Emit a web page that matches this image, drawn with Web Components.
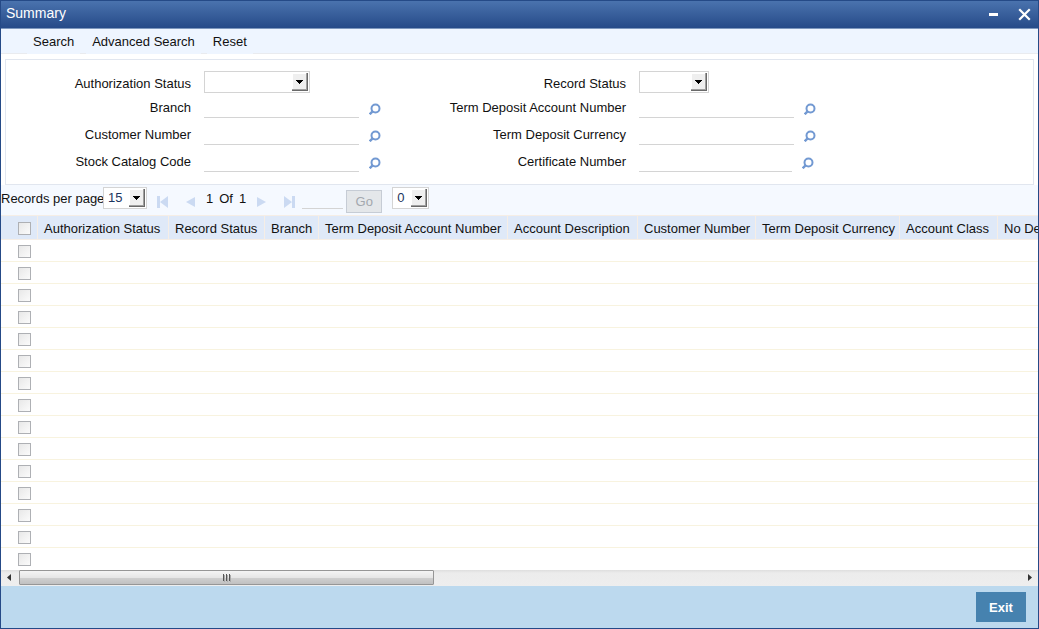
<!DOCTYPE html>
<html lang="en">
<head>
<meta charset="utf-8">
<title>Summary</title>
<style>
  html, body { margin: 0; height: 100%; }
  body { font: 13px/16px "Liberation Sans", Arial, sans-serif; color: #111; background: #fff; }
</style>
</head>
<body>
<app-window>
  <title-bar slot="title">Summary</title-bar>
  <menu-bar slot="menu">
    <menu-action>Search</menu-action>
    <menu-action>Advanced Search</menu-action>
    <menu-action>Reset</menu-action>
  </menu-bar>
  <filter-panel>
    <filter-column>
      <select-field label="Authorization Status" size="wide"></select-field>
      <lookup-field label="Branch"></lookup-field>
      <lookup-field label="Customer Number"></lookup-field>
      <lookup-field label="Stock Catalog Code"></lookup-field>
    </filter-column>
    <filter-column>
      <select-field label="Record Status"></select-field>
      <lookup-field label="Term Deposit Account Number"></lookup-field>
      <lookup-field label="Term Deposit Currency"></lookup-field>
      <lookup-field label="Certificate Number" short></lookup-field>
    </filter-column>
  </filter-panel>
  <pager-bar></pager-bar>
  <data-grid rows="15"
    columns="Authorization Status|Record Status|Branch|Term Deposit Account Number|Account Description|Customer Number|Term Deposit Currency|Account Class|No De"
    widths="131|96|54|189|130|118|144|98|120"></data-grid>
  <scroll-strip></scroll-strip>
  <footer-bar slot="footer"></footer-bar>
</app-window>

<script>
const define = (name, render) => customElements.define(name, class extends HTMLElement {
  constructor() {
    super();
    this.attachShadow({ mode: 'open' });
  }
  connectedCallback() {
    if (!this.shadowRoot.childNodes.length) this.shadowRoot.innerHTML = render(this);
  }
});

define('app-window', () => `
  <style>
    :host { display: flex; flex-direction: column; box-sizing: border-box; min-height: 100%;
            border: 1px solid #254a87; background: #fff; }
    main { flex: 1; min-width: 0; background: #fff; }
  </style>
  <slot name="title"></slot><slot name="menu"></slot>
  <main><slot></slot></main>
  <slot name="footer"></slot>`);

define('title-bar', () => `
  <style>
    :host { display: flex; align-items: center; height: 27px; padding: 0 7px 0 5px;
            border-bottom: 1px solid #7d97bd; color: #fff; font-size: 14px;
            background: linear-gradient(#4a73ae, #264a88); }
    h1 { flex: 1; margin: 0; font: inherit; line-height: 24px; padding-bottom: 3px; }
    div { display: flex; gap: 18px; }
    button { width: 13px; height: 13px; padding: 0; border: 0; background: none; color: inherit; }
    svg { display: block; }
  </style>
  <h1><slot></slot></h1>
  <div>
    <button aria-label="Minimize"><svg width="13" height="13"><path d="M2 5h9v3H2z" fill="#fff"/></svg></button>
    <button aria-label="Close"><svg width="13" height="13"><path d="M2 2l9 9M11 2l-9 9" stroke="#fff" stroke-width="2.2" stroke-linecap="square"/></svg></button>
  </div>`);

define('menu-bar', () => `
  <style>
    :host { display: flex; gap: 6px; height: 24px; padding-left: 26px;
            background: #eef5ff; border-bottom: 1px solid #e9ebef; }
  </style><slot></slot>`);

define('menu-action', () => `
  <style>
    :host { display: block; height: 25px; background: #eef5ff; }
    button { height: 25px; padding: 1px 6px 0; border: 0; background: none; font: inherit; color: inherit; }
  </style><button><slot></slot></button>`);

define('filter-panel', () => `
  <style>
    :host { display: flex; box-sizing: border-box; margin: 5px 4px 0; padding: 11px 0 12px;
            border: 1px solid #e1e6ef; }
  </style><slot></slot>`);

define('filter-column', () => `
  <style>
    :host { display: flex; flex-direction: column; gap: 2px; width: 435px; }
  </style><slot></slot>`);

const fieldStyle = `
  :host { display: flex; }
  label { box-sizing: border-box; width: 185px; margin-right: 13px; padding-top: 5px; text-align: right;
          white-space: nowrap; }`;

const selectStyle = `
  .select { position: relative; display: block; height: 22px; }
  select { appearance: none; display: block; box-sizing: border-box; width: 100%; height: 22px; margin: 0;
           padding: 0 18px 0 4px; border: 1px solid #d4d4d4; border-radius: 0;
           background: #fff; font: inherit; color: #1c3560; }
  .select svg { position: absolute; right: 2px; top: 2px; pointer-events: none; }`;

const selectButton = `
  <svg width="16" height="18" shape-rendering="crispEdges">
    <rect width="16" height="18" fill="#696969"/><rect width="15" height="17" fill="#a0a0a0"/>
    <rect width="14" height="16" fill="#fff"/><rect x="1" y="1" width="13" height="15" fill="#efefef"/>
    <path d="M4 7h7v1h-1v1h-1v1h-1v1h-1v-1h-1v-1h-1v-1h-1z" fill="#000"/>
  </svg>`;

define('select-field', host => `
  <style>${fieldStyle}${selectStyle}
    :host { height: 20px; }
    .select { width: 70px; }
    :host([size="wide"]) .select { width: 106px; }
  </style>
  <label for="value">${host.getAttribute('label')}</label>
  <span class="select"><select id="value"><option></option></select>${selectButton}</span>`);

define('lookup-field', host => `
  <style>${fieldStyle}
    :host { height: 25px; }
    label { padding-top: 7px; }
    input { box-sizing: border-box; width: 155px; height: 25px; margin: 0; padding: 0 2px; border: 0;
            border-bottom: 1px solid #d4d4d4; background: none; font: inherit; }
    :host([short]) input { width: 153px; }
    button { align-self: flex-end; margin: 0 0 3px 10px; padding: 0; border: 0; background: none; }
    svg { display: block; }
  </style>
  <label for="value">${host.getAttribute('label')}</label>
  <input id="value" type="text">
  <button aria-label="Look up ${host.getAttribute('label')}">
    <svg width="12" height="12" fill="none" stroke="#7299d2">
      <circle cx="6.500" cy="5.500" r="4" stroke-width="2"/><path d="M3.600 8.400L.7 11.300" stroke-width="2.4"/>
    </svg>
  </button>`);

define('pager-bar', () => `
  <style>${selectStyle}
    :host { display: flex; height: 28px; padding-top: 2px; background: #f5f9ff; }
    label { padding-top: 4px; width: 102px; white-space: nowrap; }
    .size { width: 44px; }
    .jump { width: 37px; margin-left: 10px; }
    button { padding: 0; border: 0; background: none; font: inherit; }
    .nav { width: 12px; height: 12px; margin: 9px 0 0 10px; }
    .nav svg { display: block; fill: #cbdaf2; }
    .gap { margin-left: 16px; }
    .count { display: flex; gap: 6px; margin-left: 9px; padding-top: 4px; }
    input { box-sizing: border-box; width: 41px; height: 22px; margin: 0 3px 0 6px; padding: 0; border: 0;
            border-bottom: 1px solid #d4d4d4; background: none; font: inherit; }
    .go { box-sizing: border-box; width: 36px; height: 23px; margin-top: 3px;
          border: 1px solid #c6ccd5; background: #e4e7ea; color: #a3a8ae; }
  </style>
  <label for="size">Records per page</label>
  <span class="select size"><select id="size"><option>15</option></select>${selectButton}</span>
  <button class="nav" aria-label="First page"><svg width="12" height="12"><path d="M0 0h3v12H0zM11 0v12L3 6z"/></svg></button>
  <button class="nav gap" aria-label="Previous page"><svg width="12" height="12"><path d="M10 1v10L1 6z"/></svg></button>
  <span class="count"><span>1</span><span>Of</span><span>1</span></span>
  <button class="nav" aria-label="Next page"><svg width="12" height="12"><path d="M1 1v10l9-5z"/></svg></button>
  <button class="nav gap" aria-label="Last page"><svg width="12" height="12"><path d="M8 0h3v12H8zM0 0v12l8-6z"/></svg></button>
  <input type="text" aria-label="Page number">
  <button class="go" disabled>Go</button>
  <span class="select jump"><select aria-label="Lock columns"><option>0</option></select>${selectButton}</span>`);

define('data-grid', host => {
  const columns = host.getAttribute('columns').split('|');
  const widths = host.getAttribute('widths').split('|');
  const box = label => `<input type="checkbox" aria-label="${label}">`;
  const rows = Array.from({ length: +host.getAttribute('rows') }, (_, i) =>
    `<tr><td>${box('Select row ' + (i + 1))}</td><td colspan="${columns.length}"></td></tr>`).join('');
  return `
  <style>
    :host { display: block; overflow: hidden; }
    table { table-layout: fixed; width: 100%; border-collapse: separate; border-spacing: 0; }
    th { box-sizing: border-box; height: 25px; padding: 2px 0 0 6px; font-weight: normal; text-align: left;
         white-space: nowrap; background: #dfe9f8; border: solid #f6eee6; border-width: 1px 1px 1px 0; }
    th:first-child { padding-left: 17px; }
    td { box-sizing: border-box; height: 22px; padding: 2px 0 0; border-bottom: 1px solid #f8f3df; }
    td:first-child { padding-left: 17px; }
    tr:last-child td { border-bottom-color: #fff; }
    input { appearance: none; display: block; box-sizing: border-box; width: 13px; height: 13px; margin: 0;
            border: 1px solid #aeb0b4; background: linear-gradient(135deg, #e8e8e8, #fbfbfb); }
  </style>
  <table>
    <colgroup><col style="width:37px">${widths.map(w => `<col style="width:${w}px">`).join('')}</colgroup>
    <thead><tr><th>${box('Select all rows')}</th>${columns.map(c => `<th>${c}</th>`).join('')}</tr></thead>
    <tbody>${rows}</tbody>
  </table>`;
});

define('scroll-strip', () => `
  <style>
    :host { display: flex; align-items: center; justify-content: space-between; height: 16px;
            background: linear-gradient(#dedede, #ececec 3px, #eee); }
    svg { display: block; flex: none; }
    .track { flex: 1; height: 16px; }
    .thumb { display: flex; align-items: center; justify-content: center; box-sizing: border-box;
             width: 41.5%; height: 15px; border: 1px solid #969696; border-radius: 1px;
             background: linear-gradient(#f4f4f4, #e6e6e6 50%, #d0d0d0 51%, #c0c0c0); }
  </style>
  <svg width="18" height="16"><path d="M10 4v7L6 7.500z" fill="#333"/></svg>
  <div class="track"><div class="thumb">
    <svg width="9" height="8"><path d="M1.500 0v7M4.500 0v7M7.500 0v7" stroke="#555"/><path d="M2.500 1v7M5.500 1v7M8.500 1v7" stroke="#aaa"/></svg>
  </div></div>
  <svg width="18" height="16"><path d="M8 4v7l4-3.500z" fill="#333"/></svg>`);

define('footer-bar', () => `
  <style>
    :host { display: flex; justify-content: flex-end; padding: 6px 12px; background: #bcd9ee; }
    button { width: 50px; height: 30px; padding: 2px 0 0; border: 0; background: #4682af; color: #fff;
             font: inherit; font-weight: bold; }
  </style><button>Exit</button>`);
</script>
</body>
</html>
